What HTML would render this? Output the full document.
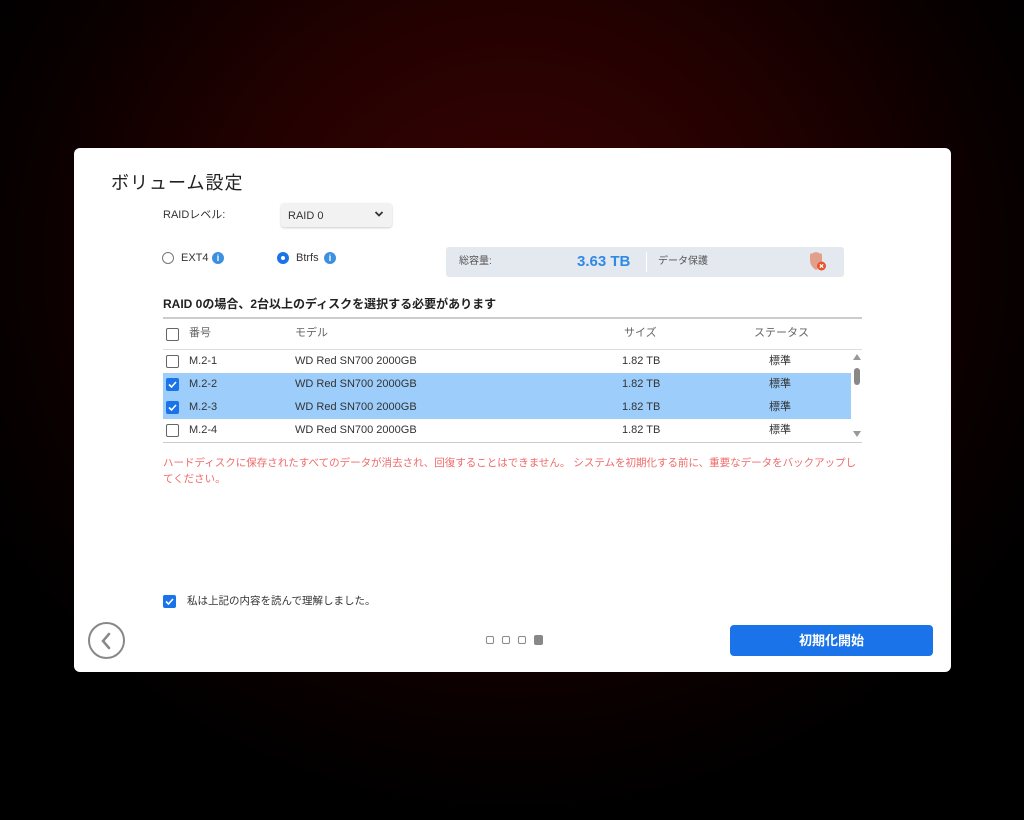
<!DOCTYPE html>
<html><head><meta charset="utf-8"><style>
*{margin:0;padding:0;box-sizing:border-box}
body{width:1024px;height:820px;overflow:hidden;font-family:"Liberation Sans","Noto Sans CJK JP",sans-serif;background:radial-gradient(ellipse 600px 560px at 512px 260px,#3a0303 0%,#240101 45%,#0a0000 80%,#000 100%);position:relative;color:#333}
.a{position:absolute}
.card{left:74px;top:148px;width:877px;height:524px;background:#fff;border-radius:6px}
.t{font-size:12px;color:#333;white-space:nowrap;line-height:14px}
.cb{width:13px;height:13px;border:1.5px solid #666;border-radius:2px;background:#fff}
.cbc{width:13px;height:13px;border-radius:2px;background:#1a73e8}
.row{left:163px;width:688px;height:23px}
.row .t{top:0;line-height:23px;font-size:11px}
.sel{background:#9ccdfb}
</style></head><body>
<div class="a card"></div>
<div class="a" style="left:111px;top:172px;font-size:18px;line-height:22px;color:#222;letter-spacing:1px">ボリューム設定</div>
<div class="a t" style="left:163px;top:208px;font-size:11px">RAIDレベル:</div>
<div class="a" style="left:281px;top:203px;width:111px;height:24px;background:#f2f2f2;border-radius:3px;box-shadow:0 1px 2px rgba(0,0,0,.2)"></div>
<div class="a t" style="left:288px;top:209px;font-size:11px">RAID 0</div>
<svg class="a" style="left:374px;top:210px" width="10" height="8"><path d="M1.5 2 L5 5.5 L8.5 2" stroke="#333" stroke-width="1.8" fill="none"/></svg>
<div class="a" style="left:162px;top:252px;width:12px;height:12px;border:1.3px solid #777;border-radius:50%"></div>
<div class="a t" style="left:181px;top:251px;font-size:11px">EXT4</div>
<div class="a" style="left:212px;top:252px;width:12px;height:12px;border-radius:50%;background:#3d8fe0;color:#fff;font-size:9px;font-weight:bold;text-align:center;line-height:12px">i</div>
<div class="a" style="left:277px;top:252px;width:12px;height:12px;border-radius:50%;background:#1a73e8"><div class="a" style="left:4px;top:4px;width:4px;height:4px;border-radius:50%;background:#fff"></div></div>
<div class="a t" style="left:296px;top:251px;font-size:11px">Btrfs</div>
<div class="a" style="left:324px;top:252px;width:12px;height:12px;border-radius:50%;background:#3d8fe0;color:#fff;font-size:9px;font-weight:bold;text-align:center;line-height:12px">i</div>
<div class="a" style="left:446px;top:247px;width:398px;height:30px;background:#e4e8ef;border-radius:3px"></div>
<div class="a t" style="left:459px;top:255px;font-size:10px;color:#555">総容量:</div>
<div class="a t" style="left:577px;top:253px;font-size:15px;line-height:18px;font-weight:bold;color:#2f8ae5">3.63 TB</div>
<div class="a" style="left:646px;top:252px;width:1px;height:20px;background:#fff"></div>
<div class="a t" style="left:658px;top:255px;font-size:10px;color:#555">データ保護</div>
<svg class="a" style="left:808px;top:251px" width="20" height="21"><path d="M8 1 L14 3 V9 C14 14 11 17 8 19 C5 17 2 14 2 9 V3 Z" fill="#e0a08a"/><circle cx="13.5" cy="15" r="4.5" fill="#e8542c"/><path d="M11.8 13.3 L15.2 16.7 M15.2 13.3 L11.8 16.7" stroke="#fff" stroke-width="1.2"/></svg>
<div class="a t" style="left:163px;top:297px;font-size:12px;font-weight:bold;color:#222">RAID 0の場合、2台以上のディスクを選択する必要があります</div>
<div class="a" style="left:163px;top:317px;width:699px;height:2px;background:#ccc"></div>
<div class="a cb" style="left:166px;top:328px"></div>
<div class="a t" style="left:189px;top:326px;font-size:11px;color:#666">番号</div>
<div class="a t" style="left:295px;top:326px;font-size:11px;color:#666">モデル</div>
<div class="a t" style="left:624px;top:326px;font-size:11px;color:#666">サイズ</div>
<div class="a t" style="left:754px;top:326px;font-size:11px;color:#666">ステータス</div>
<div class="a" style="left:163px;top:349px;width:699px;height:1px;background:#ddd"></div>
<div class="a row" style="top:350px"><div class="a cb" style="left:3px;top:5px"></div><div class="a t" style="left:26px">M.2-1</div><div class="a t" style="left:132px">WD Red SN700 2000GB</div><div class="a t" style="left:459px">1.82 TB</div><div class="a t" style="left:606px">標準</div></div>
<div class="a row sel" style="top:373px"><div class="a cbc" style="left:3px;top:5px"><svg width="13" height="13"><path d="M3 6.5 L5.5 9 L10 4" stroke="#fff" stroke-width="1.6" fill="none"/></svg></div><div class="a t" style="left:26px">M.2-2</div><div class="a t" style="left:132px">WD Red SN700 2000GB</div><div class="a t" style="left:459px">1.82 TB</div><div class="a t" style="left:606px">標準</div></div>
<div class="a row sel" style="top:396px"><div class="a cbc" style="left:3px;top:5px"><svg width="13" height="13"><path d="M3 6.5 L5.5 9 L10 4" stroke="#fff" stroke-width="1.6" fill="none"/></svg></div><div class="a t" style="left:26px">M.2-3</div><div class="a t" style="left:132px">WD Red SN700 2000GB</div><div class="a t" style="left:459px">1.82 TB</div><div class="a t" style="left:606px">標準</div></div>
<div class="a row" style="top:419px"><div class="a cb" style="left:3px;top:5px"></div><div class="a t" style="left:26px">M.2-4</div><div class="a t" style="left:132px">WD Red SN700 2000GB</div><div class="a t" style="left:459px">1.82 TB</div><div class="a t" style="left:606px">標準</div></div>
<div class="a" style="left:853px;top:354px;width:0;height:0;border-left:4px solid transparent;border-right:4px solid transparent;border-bottom:6px solid #999"></div>
<div class="a" style="left:854px;top:368px;width:6px;height:17px;background:#888;border-radius:3px"></div>
<div class="a" style="left:853px;top:431px;width:0;height:0;border-left:4px solid transparent;border-right:4px solid transparent;border-top:6px solid #999"></div>
<div class="a" style="left:163px;top:442px;width:699px;height:1px;background:#ccc"></div>
<div class="a" style="left:163px;top:455px;width:700px;font-size:10.5px;line-height:16px;color:#f06a6a">ハードディスクに保存されたすべてのデータが消去され、回復することはできません。 システムを初期化する前に、重要なデータをバックアップしてください。</div>
<div class="a cbc" style="left:163px;top:595px"><svg width="13" height="13"><path d="M3 6.5 L5.5 9 L10 4" stroke="#fff" stroke-width="1.6" fill="none"/></svg></div>
<div class="a t" style="left:187px;top:594px;font-size:10.5px">私は上記の内容を読んで理解しました。</div>
<div class="a" style="left:88px;top:622px;width:37px;height:37px;border:2.5px solid #888;border-radius:50%"></div>
<svg class="a" style="left:98px;top:631px" width="18" height="20"><path d="M11 3 L5 10 L11 17" stroke="#888" stroke-width="2.5" fill="none" stroke-linecap="round"/></svg>
<div class="a" style="left:486px;top:636px;width:8px;height:8px;border:1.5px solid #888;border-radius:2px"></div>
<div class="a" style="left:502px;top:636px;width:8px;height:8px;border:1.5px solid #888;border-radius:2px"></div>
<div class="a" style="left:518px;top:636px;width:8px;height:8px;border:1.5px solid #888;border-radius:2px"></div>
<div class="a" style="left:534px;top:635px;width:9px;height:10px;background:#888;border-radius:2px"></div>
<div class="a" style="left:730px;top:625px;width:203px;height:31px;background:#1a73e8;border-radius:4px;color:#fff;font-size:13px;font-weight:bold;text-align:center;line-height:31px">初期化開始</div>
</body></html>
